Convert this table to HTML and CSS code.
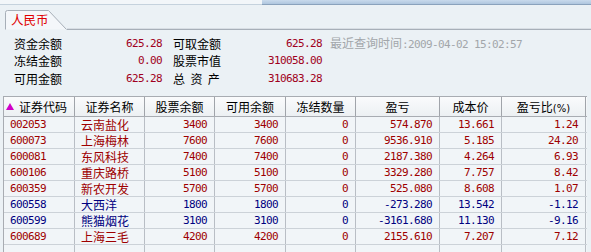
FILE: index.html
```html
<!DOCTYPE html>
<html>
<head>
<meta charset="utf-8">
<link rel="stylesheet" href="styles.css">
</head>
<body>
<div class="topstrip"><div class="topstrip-left"></div><div class="topstrip-right"></div></div>
<div class="tabbar">
  <div class="tab">
    <svg class="tab-shape" width="62" height="20" viewBox="0 0 62 20"><path d="M0.5 19.5 V2.5 Q0.5 0.5 2.5 0.5 H43.5 L61.5 19.5" fill="#F4F7FA" stroke="#A7AFB8" stroke-width="1"/></svg>
    <span class="tab-label">人民币</span>
  </div>
  <div class="tab-line"></div>
</div>
<div class="summary">
  <span class="lbl">资金余额</span><span class="val">625.28</span><span class="lbl lbl2">可取金额</span><span class="val">625.28</span><span class="time">最近查询时间<span class="num">:2009-04-02 15:02:57</span></span>
  <span class="lbl">冻结金额</span><span class="val">0.00</span><span class="lbl lbl2">股票市值</span><span class="val">310058.00</span><span></span>
  <span class="lbl">可用金额</span><span class="val">625.28</span><span class="lbl lbl2">总&nbsp;&nbsp;资&nbsp;&nbsp;产</span><span class="val">310683.28</span><span></span>
</div>
<div class="grid">
  <div class="row head">
    <div class="c first"><span class="tri"></span>证券代码</div>
    <div class="c">证券名称</div>
    <div class="c">股票余额</div>
    <div class="c">可用余额</div>
    <div class="c">冻结数量</div>
    <div class="c">盈亏</div>
    <div class="c">成本价</div>
    <div class="c">盈亏比<span class="pct">(%)</span></div>
  </div>
  <div class="row red"><div class="c code">002053</div><div class="c name">云南盐化</div><div class="c n">3400</div><div class="c n">3400</div><div class="c n">0</div><div class="c n">574.870</div><div class="c n">13.661</div><div class="c n">1.24</div></div>
  <div class="row red"><div class="c code">600073</div><div class="c name">上海梅林</div><div class="c n">7600</div><div class="c n">7600</div><div class="c n">0</div><div class="c n">9536.910</div><div class="c n">5.185</div><div class="c n">24.20</div></div>
  <div class="row red"><div class="c code">600081</div><div class="c name">东风科技</div><div class="c n">7400</div><div class="c n">7400</div><div class="c n">0</div><div class="c n">2187.380</div><div class="c n">4.264</div><div class="c n">6.93</div></div>
  <div class="row red"><div class="c code">600106</div><div class="c name">重庆路桥</div><div class="c n">5100</div><div class="c n">5100</div><div class="c n">0</div><div class="c n">3329.280</div><div class="c n">7.757</div><div class="c n">8.42</div></div>
  <div class="row red"><div class="c code">600359</div><div class="c name">新农开发</div><div class="c n">5700</div><div class="c n">5700</div><div class="c n">0</div><div class="c n">525.080</div><div class="c n">8.608</div><div class="c n">1.07</div></div>
  <div class="row blue"><div class="c code">600558</div><div class="c name">大西洋</div><div class="c n">1800</div><div class="c n">1800</div><div class="c n">0</div><div class="c n">-273.280</div><div class="c n">13.542</div><div class="c n">-1.12</div></div>
  <div class="row blue"><div class="c code">600599</div><div class="c name">熊猫烟花</div><div class="c n">3100</div><div class="c n">3100</div><div class="c n">0</div><div class="c n">-3161.680</div><div class="c n">11.130</div><div class="c n">-9.16</div></div>
  <div class="row red"><div class="c code">600689</div><div class="c name">上海三毛</div><div class="c n">4200</div><div class="c n">4200</div><div class="c n">0</div><div class="c n">2155.610</div><div class="c n">7.207</div><div class="c n">7.12</div></div>
  <div class="row"><div class="c"></div><div class="c"></div><div class="c"></div><div class="c"></div><div class="c"></div><div class="c"></div><div class="c"></div><div class="c"></div></div>
</div>
</body>
</html>
```
FILE: styles.css
```css
html, body {
  margin: 0;
  padding: 0;
}
body {
  width: 591px;
  height: 252px;
  overflow: hidden;
  background: #EBF1F5;
  font-family: "Noto Sans CJK SC", "Noto Sans", sans-serif;
  font-size: 12px;
  color: #000;
}
.topstrip {
  display: flex;
  height: 5px;
}
.topstrip-left {
  width: 262px;
  background: #F2F6F9;
  border-bottom: 1px solid #C5D2DD;
  box-sizing: border-box;
}
.topstrip-right {
  flex: 1;
  background: linear-gradient(#C9DAEC, #AFC6DE);
  border-bottom: 1px solid #8AA2BC;
  box-sizing: border-box;
}
.tabbar {
  display: flex;
  align-items: flex-end;
  height: 25px;
  padding-left: 5px;
}
.tab {
  position: relative;
  width: 62px;
  height: 20px;
  flex: none;
}
.tab-shape {
  position: absolute;
  left: 0;
  top: 0;
}
.tab-label {
  position: relative;
  display: block;
  padding-left: 6px;
  line-height: 19px;
  color: #E00000;
  font-size: 12.5px;
}
.tab-line {
  flex: 1;
  height: 1px;
  border-bottom: 1px solid #A7AFB8;
  background: #D8DEE4;
  margin-bottom: 0;
}
.summary {
  display: grid;
  grid-template-columns: 60px 88px 71px 89px auto;
  grid-auto-rows: 17.5px;
  align-items: center;
  padding-left: 14px;
  margin-top: 5px;
  line-height: 16px;
}
.lbl2 {
  padding-left: 11px;
}
.val, .num, .n, .code {
  font-family: "DejaVu Sans Mono", "Liberation Mono", monospace;
  font-size: 11px;
  letter-spacing: -0.62px;
}
.val {
  text-align: right;
  color: #A00020;
}
.time {
  padding-left: 8px;
  color: #A2A6AA;
  white-space: nowrap;
}
.grid {
  margin-top: 8px;
  margin-left: 3px;
  width: 583px;
  border-left: 1px solid #A8ACB2;
}
.row {
  display: grid;
  grid-template-columns: 71px 70px 70px 71px 70px 84px 62px 84px;
  height: 16px;
  border-bottom: 1px solid #CCD2D8;
  box-sizing: border-box;
  background: #F1F5F8;
}
.row .c {
  border-right: 1px solid #B9BEC5;
  line-height: 15px;
  white-space: nowrap;
  overflow: hidden;
}
.head {
  height: 21px;
  background: linear-gradient(#FAFBFC, #ECF0F3);
  border-top: 1px solid #A8ACB2;
  border-bottom: 1px solid #A8ACB2;
}
.head .c {
  text-align: center;
  line-height: 19px;
  border-right-color: #A0A4AA;
}
.head .first {
  text-align: left;
  padding-left: 2px;
  display: flex;
  align-items: center;
}
.tri {
  width: 0;
  height: 0;
  border-left: 4px solid transparent;
  border-right: 4px solid transparent;
  border-bottom: 7px solid #D000C8;
  margin-right: 5px;
}
.pct {
  font-family: "DejaVu Sans", sans-serif;
  font-size: 10px;
}
.code {
  padding-left: 6px;
}
.name {
  padding-left: 6px;
}
.n {
  text-align: right;
  padding-right: 7px;
}
.red .c {
  color: #9E0000;
}
.blue .c {
  color: #000080;
}
```
